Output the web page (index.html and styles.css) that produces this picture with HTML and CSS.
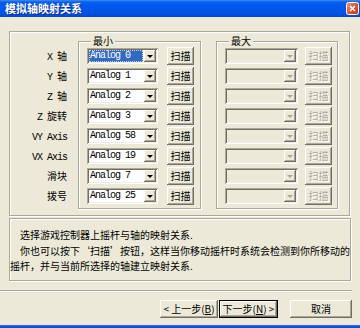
FILE: index.html
```html
<!DOCTYPE html>
<html lang="zh-CN">
<head>
    <meta charset="UTF-8">
    <meta name="viewport" content="width=device-width, initial-scale=1.0">
    <title>模拟轴映射关系</title>
    <link rel="stylesheet" href="styles.css">
</head>
<body>
    <div class="window">
        <div class="titlebar">
            <span class="title">模拟轴映射关系</span>
            <button class="close" aria-label="关闭">
                <svg width="13" height="13" viewBox="0 0 13 13">
                    <defs>
                        <linearGradient id="closeFill" x1="0" y1="0" x2="1" y2="1">
                            <stop offset="0" stop-color="#f29778"/>
                            <stop offset="0.5" stop-color="#e2552e"/>
                            <stop offset="1" stop-color="#c23a12"/>
                        </linearGradient>
                    </defs>
                    <rect x="0.5" y="0.5" width="12" height="12" rx="2" fill="url(#closeFill)" stroke="#fff"/>
                    <path d="M4 4l5 5M9 4l-5 5" stroke="#fff" stroke-width="1.6"/>
                </svg>
            </button>
        </div>

        <div class="frame">
            <div class="labels">
                <div><span class="en">X&nbsp;</span>轴</div>
                <div><span class="en">Y&nbsp;</span>轴</div>
                <div><span class="en">Z&nbsp;</span>轴</div>
                <div><span class="en">Z&nbsp;</span>旋转</div>
                <div><span class="en">VY Axis</span></div>
                <div><span class="en">VX Axis</span></div>
                <div>滑块</div>
                <div>拨号</div>
            </div>

            <fieldset class="group group-min">
                <legend>最小</legend>
                <div class="row">
                    <div class="combo"><span class="value selected">Analog 0</span><span class="arrow"></span></div>
                    <button class="scan">扫描</button>
                </div>
                <div class="row">
                    <div class="combo"><span class="value">Analog 1</span><span class="arrow"></span></div>
                    <button class="scan">扫描</button>
                </div>
                <div class="row">
                    <div class="combo"><span class="value">Analog 2</span><span class="arrow"></span></div>
                    <button class="scan">扫描</button>
                </div>
                <div class="row">
                    <div class="combo"><span class="value">Analog 3</span><span class="arrow"></span></div>
                    <button class="scan">扫描</button>
                </div>
                <div class="row">
                    <div class="combo"><span class="value">Analog 58</span><span class="arrow"></span></div>
                    <button class="scan">扫描</button>
                </div>
                <div class="row">
                    <div class="combo"><span class="value">Analog 19</span><span class="arrow"></span></div>
                    <button class="scan">扫描</button>
                </div>
                <div class="row">
                    <div class="combo"><span class="value">Analog 7</span><span class="arrow"></span></div>
                    <button class="scan">扫描</button>
                </div>
                <div class="row">
                    <div class="combo"><span class="value">Analog 25</span><span class="arrow"></span></div>
                    <button class="scan">扫描</button>
                </div>
            </fieldset>

            <fieldset class="group group-max">
                <legend>最大</legend>
                <div class="row">
                    <div class="combo disabled"><span class="value"></span><span class="arrow"></span></div>
                    <button class="scan" disabled>扫描</button>
                </div>
                <div class="row">
                    <div class="combo disabled"><span class="value"></span><span class="arrow"></span></div>
                    <button class="scan" disabled>扫描</button>
                </div>
                <div class="row">
                    <div class="combo disabled"><span class="value"></span><span class="arrow"></span></div>
                    <button class="scan" disabled>扫描</button>
                </div>
                <div class="row">
                    <div class="combo disabled"><span class="value"></span><span class="arrow"></span></div>
                    <button class="scan" disabled>扫描</button>
                </div>
                <div class="row">
                    <div class="combo disabled"><span class="value"></span><span class="arrow"></span></div>
                    <button class="scan" disabled>扫描</button>
                </div>
                <div class="row">
                    <div class="combo disabled"><span class="value"></span><span class="arrow"></span></div>
                    <button class="scan" disabled>扫描</button>
                </div>
                <div class="row">
                    <div class="combo disabled"><span class="value"></span><span class="arrow"></span></div>
                    <button class="scan" disabled>扫描</button>
                </div>
                <div class="row">
                    <div class="combo disabled"><span class="value"></span><span class="arrow"></span></div>
                    <button class="scan" disabled>扫描</button>
                </div>
            </fieldset>
        </div>

        <div class="desc">
            <p>选择游戏控制器上摇杆与轴的映射关系.</p>
            <p class="wrapped">你也可以按下‘扫描’按钮，这样当你移动摇杆时系统会检测到你所移动的<br>摇杆，并与当前所选择的轴建立映射关系.</p>
        </div>

        <div class="separator"></div>

        <div class="actions">
            <button class="btn btn-prev">&lt; 上一步(<u>B</u>)</button>
            <button class="btn btn-next btn-default">下一步(<u>N</u>) &gt;</button>
            <button class="btn btn-cancel">取消</button>
        </div>

        <div class="bottom-edge"></div>
    </div>
</body>
</html>
```

FILE: styles.css
```css
body {
    margin: 0;
    background-color: #ece9d8;
    font-family: "Noto Sans CJK SC", sans-serif;
    font-size: 10px;
    color: #000;
}

.window {
    width: 360px;
    height: 328px;
    display: flex;
    flex-direction: column;
    overflow: hidden;
}

/* title bar */
.titlebar {
    flex: none;
    height: 17px;
    display: flex;
    align-items: center;
    justify-content: space-between;
    padding: 0 1px 0 5px;
    background: linear-gradient(to bottom, #3d8ff6 0, #0a5fec 2px, #0058ee 6px, #0054e3 13px, #0048d4 17px);
}

.title {
    color: #fff;
    font-weight: bold;
    font-size: 11px;
    line-height: 17px;
    text-shadow: 1px 1px #0c2a9a;
}

.close {
    width: 13px;
    height: 13px;
    padding: 0;
    border: none;
    background: none;
    display: block;
}

.close svg {
    display: block;
}

/* etched boxes */
.frame,
.desc,
.group {
    border: 1px solid #aca899;
    box-shadow: inset 1px 1px #fff, 1px 1px #fff;
}

.frame {
    flex: none;
    box-sizing: border-box;
    width: 341px;
    height: 185px;
    margin: 14px 0 0 9px;
    display: flex;
    align-items: flex-start;
}

.labels {
    width: 57px;
    padding-top: 16px;
    display: flex;
    flex-direction: column;
    gap: 4px;
}

.labels div {
    height: 16px;
    line-height: 16px;
    text-align: right;
    white-space: nowrap;
}

.en {
    font-family: "Liberation Mono", monospace;
    font-size: 10px;
    letter-spacing: -1px;
}

/* group boxes */
.group {
    box-sizing: border-box;
    margin: 3px 0 0 11px;
    padding: 1px 0 0 8px;
    min-width: 0;
    height: 174px;
    display: flex;
    flex-direction: column;
    gap: 4px;
}

.group-min {
    width: 123px;
}

.group-max {
    width: 122px;
    margin-left: 15px;
}

.group legend {
    margin-left: 4px;
    padding: 0 2px;
    line-height: 12px;
    font-size: 10px;
    background-color: #ece9d8;
}

.row {
    height: 16px;
    display: flex;
    align-items: center;
    gap: 9px;
}

.group-max .row {
    gap: 7px;
}

/* combo boxes */
.combo {
    box-sizing: border-box;
    width: 71px;
    height: 16px;
    padding: 2px;
    display: flex;
    background-color: #fff;
    border: none;
    box-shadow: inset 1px 1px #aca899, inset -1px -1px #fff, inset 2px 2px #716f64, inset -2px -2px #f1efe2;
}

.group-max .combo {
    width: 73px;
}

.combo.disabled {
    background-color: #ece9d8;
}

.combo .value {
    flex: 1;
    min-width: 0;
    margin-right: 1px;
    padding-left: 1px;
    font-family: "Liberation Mono", monospace;
    font-size: 10px;
    letter-spacing: -1px;
    line-height: 12px;
    white-space: nowrap;
    overflow: hidden;
}

.combo .value.selected {
    background-color: #316ac5;
    color: #fff;
    outline: 1px dotted #c9d4ec;
    outline-offset: -1px;
}

.combo .arrow {
    flex: none;
    width: 12px;
    height: 12px;
    display: flex;
    align-items: center;
    justify-content: center;
    background-color: #ece9d8;
    box-shadow: inset -1px -1px #716f64, inset 1px 1px #fff, inset -2px -2px #aca899;
}

.combo .arrow::before {
    content: "";
    border-left: 3px solid transparent;
    border-right: 3px solid transparent;
    border-top: 3px solid #000;
    margin-top: 1px;
}

.combo.disabled .arrow::before {
    border-top-color: #aca899;
}

/* buttons */
.scan,
.btn {
    box-sizing: border-box;
    padding: 0;
    border: none;
    background-color: #ece9d8;
    font-family: "Noto Sans CJK SC", sans-serif;
    font-size: 10px;
    color: #000;
    box-shadow: inset -1px -1px #716f64, inset 1px 1px #fff, inset -2px -2px #aca899;
}

.scan {
    width: 27px;
    height: 18px;
    margin: -1px 0;
    line-height: 16px;
}

.scan:disabled {
    color: #aca899;
    text-shadow: 1px 1px #fff;
}

.desc {
    flex: none;
    box-sizing: border-box;
    width: 342px;
    height: 63px;
    margin: 2px 0 0 9px;
    padding: 9px 0 0 0;
}

.desc p {
    margin: 0 0 3px;
    line-height: 13px;
    text-indent: 10px;
    white-space: nowrap;
}

.desc .wrapped {
    line-height: 14.5px;
}

.separator {
    flex: none;
    width: 352px;
    margin-top: 9px;
    border-top: 1px solid #aca899;
    border-bottom: 1px solid #fff;
}

.actions {
    flex: none;
    height: 18px;
    margin-top: 8px;
    padding-left: 160px;
    display: flex;
    gap: 1px;
}

.btn {
    height: 18px;
    line-height: 18px;
}

.btn-prev {
    width: 58px;
}

.btn-next {
    width: 59px;
}

.btn-cancel {
    width: 62px;
    margin-left: 11px;
}

.btn-default {
    box-shadow: inset 0 0 0 1px #000, inset -2px -2px #716f64, inset 2px 2px #fff, inset -3px -3px #aca899;
}

.bottom-edge {
    flex: none;
    height: 3px;
    margin-top: auto;
    background: linear-gradient(to bottom, #2a6cf0, #0842c8);
}
```
